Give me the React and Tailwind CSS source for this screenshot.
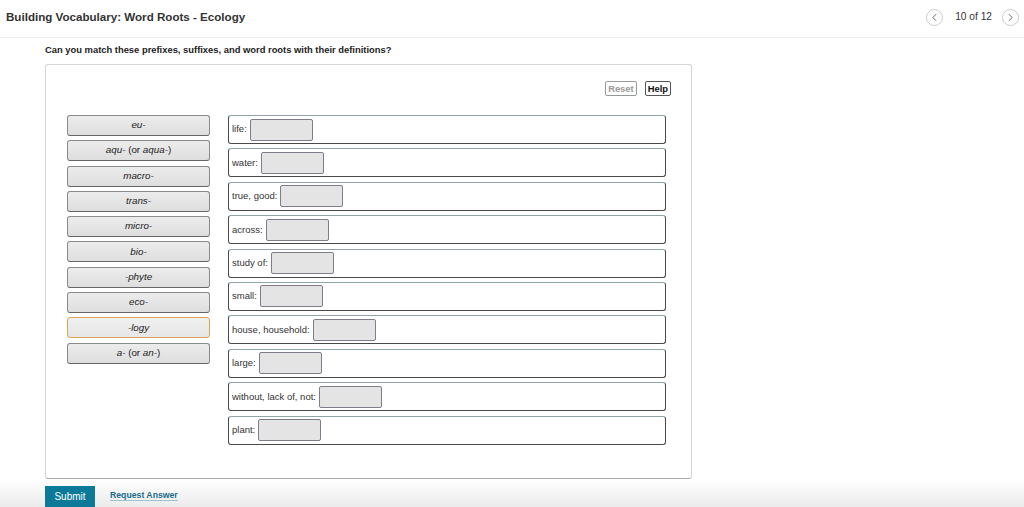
import React from 'react';

const roots = [
  { parts: [['eu-', true]] },
  { parts: [['aqu-', true], [' (or ', false], ['aqua-', true], [')', false]] },
  { parts: [['macro-', true]] },
  { parts: [['trans-', true]] },
  { parts: [['micro-', true]] },
  { parts: [['bio-', true]] },
  { parts: [['-phyte', true]] },
  { parts: [['eco-', true]] },
  { parts: [['-logy', true]], active: true },
  { parts: [['a-', true], [' (or ', false], ['an-', true], [')', false]] },
];

const definitions = [
  'life:',
  'water:',
  'true, good:',
  'across:',
  'study of:',
  'small:',
  'house, household:',
  'large:',
  'without, lack of, not:',
  'plant:',
];

const Chevron = ({ dir }) => (
  <svg viewBox="0 0 16 16" className="w-[9px] h-[9px]" fill="none" stroke="#555" strokeWidth="1.6" strokeLinecap="round" strokeLinejoin="round">
    {dir === 'left' ? <path d="M10.5 2.5 5 8l5.5 5.5" /> : <path d="M5.5 2.5 11 8l-5.5 5.5" />}
  </svg>
);

export default function App() {
  return (
    <div className="w-[1024px] h-[507px] overflow-hidden bg-white relative text-[#333]" style={{ fontFamily: '"Liberation Sans", Arial, sans-serif' }}>
      {/* Header */}
      <div className="h-[38px] flex items-center justify-between pl-[6px] pr-[5px] pb-[4px] border-b border-[#ececec]">
        <h1 className="text-[11.6px] font-bold text-[#333]">Building Vocabulary: Word Roots - Ecology</h1>
        <div className="flex items-center pt-[1px]">
          <button className="w-[17px] h-[17px] rounded-full border border-[#ccc] flex items-center justify-center">
            <Chevron dir="left" />
          </button>
          <span className="text-[10.2px] text-[#333] ml-[12px] mr-[10px]">10 of 12</span>
          <button className="w-[17px] h-[17px] rounded-full border border-[#ccc] flex items-center justify-center">
            <Chevron dir="right" />
          </button>
        </div>
      </div>

      {/* Question */}
      <div className="px-[45px]">
        <p className="text-[9.4px] font-bold text-[#222] mt-[6px] leading-[12px]">
          Can you match these prefixes, suffixes, and word roots with their definitions?
        </p>

        <div className="mt-[8px] w-[647px] h-[415px] border border-[#d4d4d4] border-b-[#aaa] rounded-[3px] pt-[16px] pl-[21px] pr-[25px]">
          <div className="flex justify-end gap-[8px] mr-[-5px]">
            <button className="h-[15px] px-[2px] border border-[#999] rounded-[2px] text-[9.4px] font-bold text-[#999] leading-[13px]">Reset</button>
            <button className="h-[15px] px-[2px] border border-[#555] rounded-[2px] text-[9.4px] font-bold text-[#111] leading-[13px]">Help</button>
          </div>

          <div className="flex mt-[19px] gap-[18px]">
            <div className="w-[143px] flex flex-col gap-[4.3px]">
              {roots.map((r, i) => (
                <div
                  key={i}
                  className={`h-[21px] rounded-[3px] border flex items-center justify-center text-[9.8px] text-[#222] ${
                    r.active
                      ? 'border-[#d9a256] bg-gradient-to-b from-[#f0f0f0] to-[#e6e6e6]'
                      : 'border-[#8a8a8a] border-b-[#666] bg-gradient-to-b from-[#ececec] to-[#dedede]'
                  }`}
                >
                  {r.parts.map(([t, it], j) => (
                    <span key={j} className={it ? 'italic' : ''} style={{ whiteSpace: 'pre' }}>{t}</span>
                  ))}
                </div>
              ))}
            </div>

            <div className="flex-1 flex flex-col gap-[4.4px]">
              {definitions.map((d, i) => (
                <div
                  key={i}
                  className="h-[29px] rounded-[3px] border border-[#4a4a4a] border-t-[#8fa3a8] bg-white flex items-center pl-[3px]"
                >
                  <span className="text-[9.5px] text-[#333]">{d}</span>
                  <div className="ml-[3px] w-[63px] h-[22px] bg-[#e4e4e4] border border-[#7d7d8c] rounded-[2px]" />
                </div>
              ))}
            </div>
          </div>
        </div>
      </div>

      {/* Footer */}
      <div className="absolute left-0 right-0 bottom-0 h-[28px] bg-gradient-to-b from-white to-[#ebebeb] flex items-end pl-[45px]">
        <button className="h-[21px] w-[50px] bg-[#0b7a98] text-white text-[10px]">Submit</button>
        <span className="ml-[15px] mb-[6px] text-[8.7px] font-bold text-[#1a6c8a] border-b border-[#9cc4d2] leading-[10px]">Request Answer</span>
      </div>
    </div>
  );
}
